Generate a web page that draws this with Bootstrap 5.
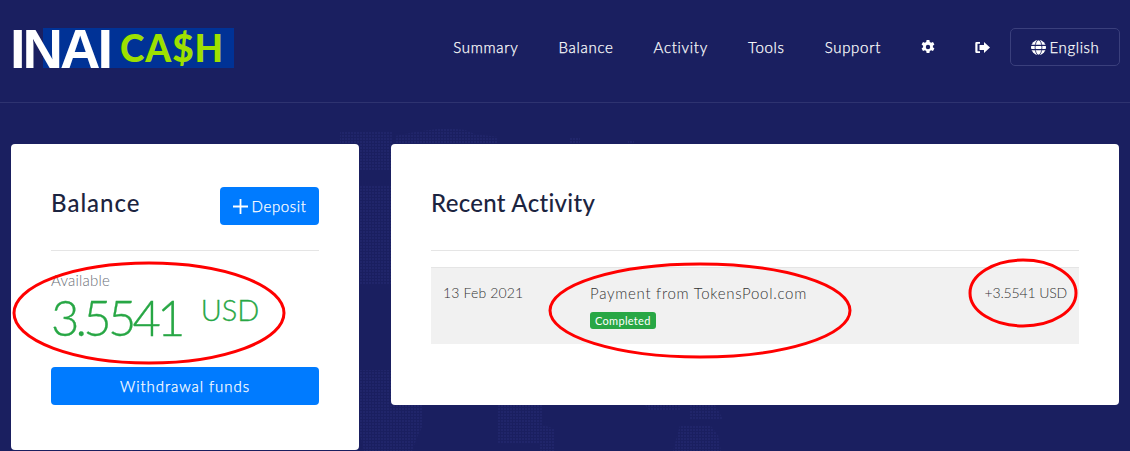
<!DOCTYPE html>
<html><head>
  <title>Inai Cash</title>
  <link rel="stylesheet" href="https://cdn.jsdelivr.net/npm/bootstrap@5.3.0/dist/css/bootstrap.min.css">
  <style>
    html, body { height: 451px; overflow: hidden; }
    body {
      position: relative;
      background-color: #1a1f60;
      font-family: "Lato", "Noto Sans", sans-serif;
      color: #54585c;
    }
    .map-dots { position: absolute; left: 0; top: 0; z-index: 0; }
    .top-bar, .page-body { position: relative; z-index: 1; }
    .top-bar { height: 103px; padding: 28px 10px 0 13px; border-bottom: 1px solid #2e3370; align-items: flex-start; }
    .logo { height: 40px; line-height: 40px; }
    .logo-inai {
      width: 99px;
      font: 700 56px/41px "Liberation Sans", sans-serif;
      color: #fff;
      letter-spacing: -3px;
      text-indent: -3px;
      white-space: nowrap;
      background: linear-gradient(#003296, #003296) 30px 0 / 69px 100% no-repeat;
    }
    .logo-cash { width: 122px; background: #003296; color: #9ee000; font: 900 37px/40px "Lato", sans-serif; padding-left: 8px; letter-spacing: .9px; }
    .top-link { color: #fff; text-decoration: none; font-size: 15px; font-weight: 300; letter-spacing: .7px; line-height: 38px; -webkit-text-stroke: .25px #fff; }
    .top-links { gap: 40px; }
    .top-links svg { display: block; }
    .lang-btn { width: 110px; height: 38px; border: 1px solid #3a3f7c; border-radius: 5px; color: #fff; font-size: 15px; font-weight: 300; letter-spacing: .6px; margin-left: -20px; -webkit-text-stroke: .25px #fff; }
    .page-body { padding: 41px 11px 0; gap: 32px; }
    .panel-left, .panel-right { background: #fff; border-radius: 4px; position: relative; }
    .panel-left { width: 348px; height: 306px; padding: 43px 40px 0; }
    .panel-right { width: 728px; height: 261px; padding: 43px 40px 0; }
    .panel-head { height: 64px; border-bottom: 1px solid #e5e5e5; }
    .panel-title { font-size: 24px; line-height: 32px; margin: 0; color: #1c2440; font-weight: 500; letter-spacing: .3px; }
    .title-wide { letter-spacing: 1px; }
    .btn-inai { background: #007bff; color: #fff; border: 0; border-radius: 4px; font-size: 15px; font-weight: 300; letter-spacing: .6px; -webkit-text-stroke: .25px #fff; }
    .btn-deposit { width: 99px; height: 38px; padding: 0; }
    .btn-withdraw { width: 100%; height: 38px; margin-top: 19px; letter-spacing: .95px; }
    .avail-label { color: #6b7078; font-size: 15px; font-weight: 300; letter-spacing: .2px; line-height: 20px; margin-top: 19px; }
    .avail-amount { color: #28a745; font-size: 49px; line-height: 46px; height: 54px; margin-top: 4px; font-weight: 300; letter-spacing: -3.800px; -webkit-text-stroke: .3px #28a745; }
    .avail-unit { font-size: 29px; line-height: 1; vertical-align: 15px; margin-left: 19px; letter-spacing: 0; }
    .activity-row { margin-top: 16px; height: 77px; background: #f1f1f1; border-top: 1px solid #e5e5e5; padding: 15px 12px; font-size: 14px; font-weight: 400; line-height: 20px; color: #555; }
    .activity-date { width: 147px; font-weight: 300; letter-spacing: .15px; color: #333; }
    .activity-name { font-size: 15px; font-weight: 300; letter-spacing: .72px; color: #333; }
    .activity-sum { font-weight: 300; letter-spacing: -.15px; color: #333; }
    .pill-done { display: inline-block; background: #28a745; color: #fff; font-size: 11px; line-height: 17px; padding: 0 5px; border-radius: 3px; margin-top: 9px; letter-spacing: .3px; vertical-align: top; }
    .scribbles { position: absolute; left: 0; top: 0; z-index: 2; pointer-events: none; }
  </style>
</head>
<body>
  <!-- faint dotted world map behind the panels -->
  <svg class="map-dots" width="1130" height="451">
    <defs>
      <pattern id="mapdot" width="3" height="3" patternUnits="userSpaceOnUse">
        <rect width="2" height="2" fill="#20256a"/>
      </pattern>
    </defs>
    <g fill="url(#mapdot)">
      <path d="M340 132h52v12h-52zM395 136l20-4 30-4 20 2 10 4 23 3v7h-103z"/>
      <path d="M570 138h10v6h-10zM628 140h6v4h-6z"/>
      <path d="M359 144h32v26h-32zM359 185h32v100h-32zM359 370h32v35h-32z"/>
      <path d="M358 405h65v20l-5 10-6 16h-48l-5-20z"/>
      <path d="M498 405h45v20l12 4v22h-15v-8h-42z"/>
      <path d="M645 405h35v6h-30zM690 405h25l8 14h-33z"/>
      <path d="M680 425h30l8 10 3 16h-48z"/>
    </g>
  </svg>

  <header class="top-bar d-flex justify-content-between">
    <div class="logo d-flex">
      <div class="logo-inai">INAI</div>
      <div class="logo-cash">CA$H</div>
    </div>
    <nav class="top-links d-flex align-items-center">
      <a class="top-link" href="#">Summary</a>
      <a class="top-link" href="#">Balance</a>
      <a class="top-link" href="#">Activity</a>
      <a class="top-link" href="#">Tools</a>
      <a class="top-link" href="#">Support</a>
      <a href="#"><svg width="14" height="14" viewBox="0 0 14 14" fill="#fff"><path fill-rule="evenodd" d="M5.600 0h2.800l.4 2 1.300.7 1.900-.7 1.400 2.400-1.500 1.300v1.600l1.500 1.300-1.400 2.400-1.900-.7-1.300.7-.4 2H5.600l-.4-2-1.300-.7-1.900.7L.6 8.600l1.500-1.300V5.700L.6 4.400 2 2l1.900.7L5.200 2zM7 4.800a2.200 2.200 0 1 0 0 4.400 2.200 2.200 0 0 0 0-4.400z"/></svg></a>
      <a href="#"><svg width="15" height="13" viewBox="0 0 15 13" fill="#fff"><path d="M1.500 1H5v1.800H2.500v7.400H5V12H1.500A1.200 1.200 0 0 1 .3 10.800V2.200A1.200 1.200 0 0 1 1.500 1z"/><path d="M9 1l6 5.500L9 12V9H4.500V4H9z"/></svg></a>
      <div class="lang-btn d-flex align-items-center justify-content-center gap-1">
        <svg width="15" height="15" viewBox="0 0 16 16">
          <circle cx="8" cy="8" r="8" fill="#fff"/>
          <ellipse cx="8" cy="8" rx="3.600" ry="8" fill="none" stroke="#1a1f60" stroke-width=".9"/>
          <path d="M0 5h16v1.300H0zM0 9.700h16V11H0z" fill="#1a1f60"/>
        </svg>
        English
      </div>
    </nav>
  </header>

  <main class="page-body d-flex align-items-start">
    <section class="panel-left">
      <div class="panel-head d-flex justify-content-between align-items-start">
        <h2 class="panel-title title-wide">Balance</h2>
        <button class="btn-inai btn-deposit d-flex align-items-center justify-content-center gap-1" type="button">
          <svg width="15" height="15" viewBox="0 0 15 15" fill="#fff"><path d="M6.600 0h1.800v6.600H15v1.800H8.400V15H6.600V8.400H0V6.600h6.600z"/></svg>
          Deposit
        </button>
      </div>
      <div class="avail-label">Available</div>
      <div class="avail-amount">3.5541<span class="avail-unit">USD</span></div>
      <button class="btn-inai btn-withdraw" type="button">Withdrawal funds</button>
    </section>

    <section class="panel-right">
      <div class="panel-head">
        <h2 class="panel-title">Recent Activity</h2>
      </div>
      <div class="activity-row d-flex">
        <div class="activity-date">13 Feb 2021</div>
        <div class="flex-grow-1">
          <div class="activity-name">Payment from TokensPool.com</div>
          <span class="pill-done">Completed</span>
        </div>
        <div class="activity-sum">+3.5541 USD</div>
      </div>
    </section>
  </main>

  <svg class="scribbles" width="1130" height="451" fill="none" stroke="#f00" stroke-width="3">
    <ellipse cx="149" cy="313" rx="135" ry="50"/>
    <ellipse cx="700" cy="310.500" rx="150" ry="46.500"/>
    <ellipse cx="1023" cy="293" rx="53" ry="33"/>
  </svg>
</body></html>
